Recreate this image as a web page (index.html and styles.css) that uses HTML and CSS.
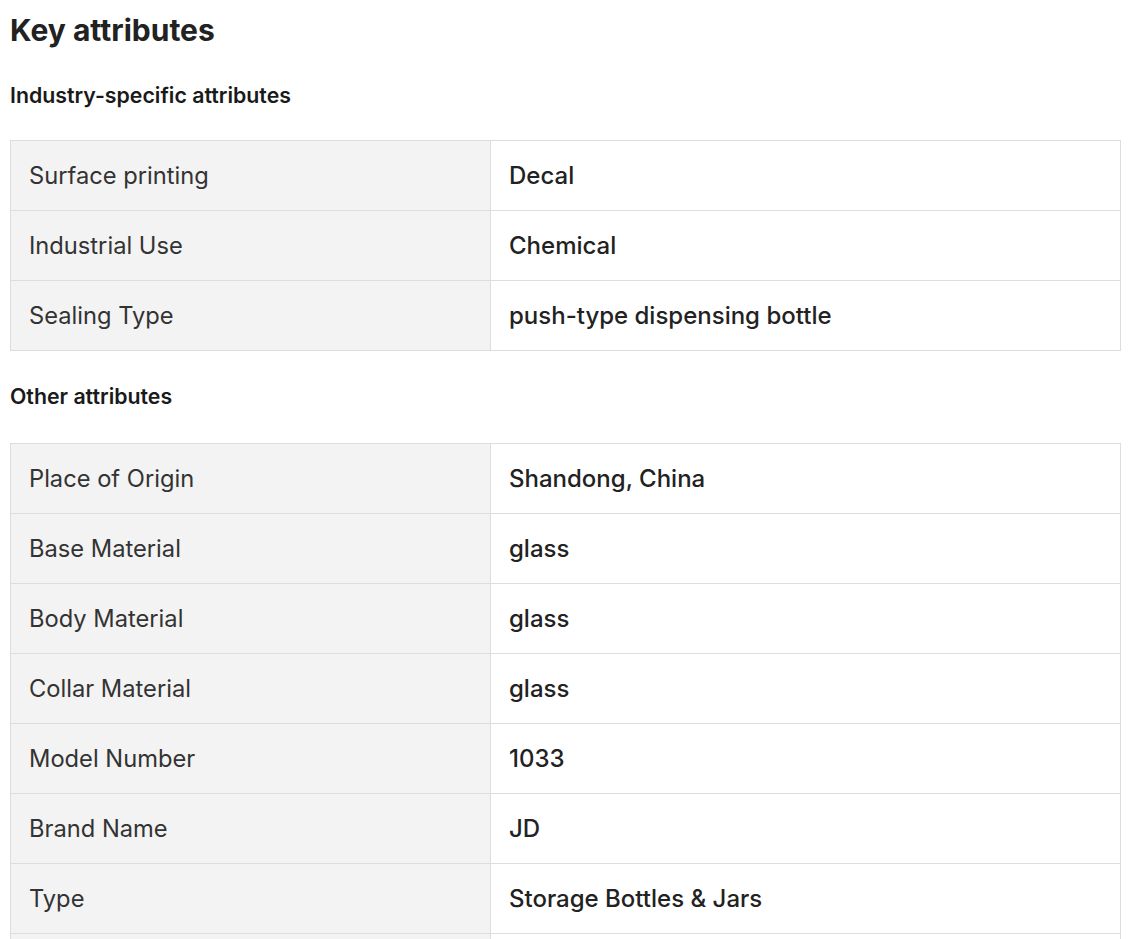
FILE: index.html
```html
<!DOCTYPE html>
<html>
<head>
<meta charset="utf-8">
<link rel="stylesheet" href="styles.css">
</head>
<body>
<div class="page">
  <h1 class="title">Key attributes</h1>
  <h2 class="section-title">Industry-specific attributes</h2>
  <table class="attrs">
    <tr><td class="k">Surface printing</td><td class="v">Decal</td></tr>
    <tr><td class="k">Industrial Use</td><td class="v">Chemical</td></tr>
    <tr><td class="k">Sealing Type</td><td class="v">push-type dispensing bottle</td></tr>
  </table>
  <h2 class="section-title section-title--second">Other attributes</h2>
  <table class="attrs">
    <tr><td class="k">Place of Origin</td><td class="v">Shandong, China</td></tr>
    <tr><td class="k">Base Material</td><td class="v">glass</td></tr>
    <tr><td class="k">Body Material</td><td class="v">glass</td></tr>
    <tr><td class="k">Collar Material</td><td class="v">glass</td></tr>
    <tr><td class="k">Model Number</td><td class="v">1033</td></tr>
    <tr><td class="k">Brand Name</td><td class="v">JD</td></tr>
    <tr><td class="k">Type</td><td class="v">Storage Bottles &amp; Jars</td></tr>
    <tr><td class="k"></td><td class="v"></td></tr>
  </table>
</div>
</body>
</html>
```
FILE: styles.css
```css
html, body {
  margin: 0;
  padding: 0;
  background: #fff;
}
body {
  font-family: Inter, "Noto Sans", sans-serif;
  color: #222;
}
.page {
  padding: 11px 10px 0 10px;
  width: 1111px;
}
.title {
  margin: 0;
  font-size: 30px;
  line-height: 38px;
  font-weight: 700;
  color: #222;
}
.section-title {
  margin: 33px 0 32px 0;
  font-size: 21.3px;
  line-height: 26px;
  font-weight: 600;
  color: #1a1a1a;
}
.section-title--second {
  margin: 32px 0 34px 0;
}
.attrs {
  width: 1111px;
  border-collapse: collapse;
  table-layout: fixed;
}
.attrs td {
  border: 1px solid #dddddd;
  height: 70px;
  padding: 0 18px;
  font-size: 23.7px;
  line-height: 30px;
  box-sizing: border-box;
}
.attrs td.k {
  width: 480px;
  background: #f3f3f3;
  color: #333;
  font-weight: 400;
}
.attrs td.v {
  background: #fff;
  color: #222;
  font-weight: 500;
  font-size: 24px;
}
```
